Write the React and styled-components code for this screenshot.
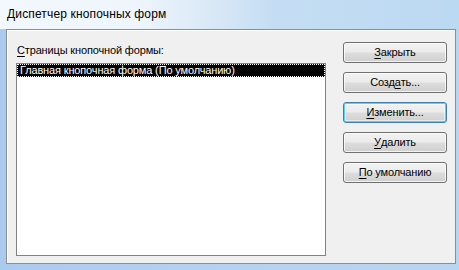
import React from "react";
import styled, { createGlobalStyle } from "styled-components";

const GlobalStyle = createGlobalStyle`
  html, body { margin: 0; padding: 0; background: #ffffff; }
  #root { width: 459px; height: 270px; }
`;

const FONT = `"Liberation Sans", "DejaVu Sans", Arial, sans-serif`;

const Window = styled.div`
  width: 459px;
  height: 270px;
  box-sizing: border-box;
  display: flex;
  flex-direction: column;
  padding: 0 3px 6px 6px;
  background: linear-gradient(to right, #a9cbef 0%, #b3d2f1 40%, #b8d6f2 100%);
  font-family: ${FONT};
  font-size: 11px;
  letter-spacing: -0.15px;
  color: #000;
`;

const TitleBar = styled.div`
  height: 29px;
  margin: 0 -3px 0 -6px;
  padding-left: 7px;
  display: flex;
  align-items: center;
  padding-bottom: 1px;
  box-sizing: border-box;
  background: linear-gradient(
    to right,
    #f3f8fd 0%,
    #eef5fc 30%,
    #dbe9f7 45%,
    #c4ddf3 60%,
    #bcd9f2 100%
  );
  font-size: 12px;
  letter-spacing: 0.15px;
`;

const Client = styled.div`
  flex: 1;
  display: flex;
  background: #f0f0f0;
  border: 1px solid #8b8f95;
  box-shadow: inset 1px 1px 0 #ffffff;
  padding: 12px 0 7px 9px;
  gap: 17px;
`;

const LeftCol = styled.div`
  width: 310px;
  display: flex;
  flex-direction: column;
`;

const Label = styled.div`
  height: 21px;
  line-height: 17px;
  padding-left: 1px;
`;

const ListBox = styled.div`
  flex: 1;
  background: #ffffff;
  border: 1px solid #828282;
  box-sizing: border-box;
`;

const ListItem = styled.div`
  height: 13px;
  line-height: 13px;
  padding-left: 3px;
  background: ${(p) => (p.$selected ? "#000000" : "transparent")};
  color: ${(p) => (p.$selected ? "#ffffff" : "#000000")};
  outline: ${(p) => (p.$selected ? "1px dotted #ffffff" : "none")};
  outline-offset: -1px;
  white-space: nowrap;
  box-sizing: border-box;
`;

const ButtonCol = styled.div`
  width: 104px;
  display: flex;
  flex-direction: column;
  gap: 9px;
`;

const Button = styled.div`
  height: 21px;
  box-sizing: border-box;
  border: 1px solid ${(p) => (p.$focused ? "#3c7fb1" : "#707070")};
  border-radius: 3px;
  background: linear-gradient(
    to bottom,
    #f2f2f2 0%,
    #ebebeb 48%,
    #dddddd 52%,
    #cfcfcf 100%
  );
  box-shadow: ${(p) =>
    p.$focused
      ? "inset 0 0 0 1px #5fd0f5, inset 0 0 0 2px rgba(255,255,255,0.5)"
      : "inset 0 0 0 1px rgba(255,255,255,0.75)"};
  display: flex;
  align-items: center;
  justify-content: center;
  line-height: 14px;
  padding-bottom: 1px;
`;

const U = styled.span`
  text-decoration: underline;
  text-underline-offset: 2px;
`;

export default function App() {
  return (
    <>
      <GlobalStyle />
      <Window>
        <TitleBar>Диспетчер кнопочных форм</TitleBar>
        <Client>
          <LeftCol>
            <Label>
              <U>С</U>траницы кнопочной формы:
            </Label>
            <ListBox>
              <ListItem $selected>Главная кнопочная форма (По умолчанию)</ListItem>
            </ListBox>
          </LeftCol>
          <ButtonCol>
            <Button>
              <U>З</U>акрыть
            </Button>
            <Button>
              Созд<U>а</U>ть...
            </Button>
            <Button $focused>
              <U>И</U>зменить...
            </Button>
            <Button>
              <U>У</U>далить
            </Button>
            <Button>
              <U>П</U>о умолчанию
            </Button>
          </ButtonCol>
        </Client>
      </Window>
    </>
  );
}
